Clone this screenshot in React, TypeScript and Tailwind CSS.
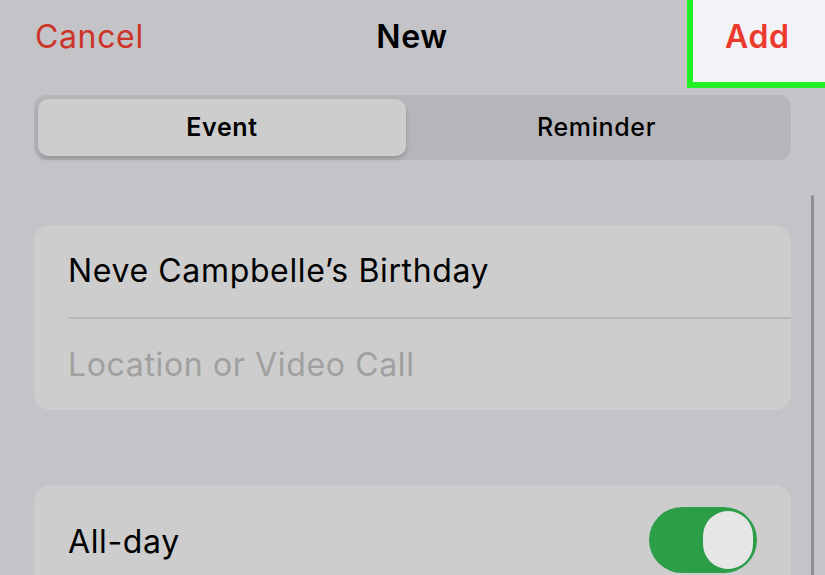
export default function App() {
  return (
    <div className="w-[825px] h-[575px] overflow-hidden bg-[#c4c3c8] relative tracking-[0.04em]" style={{ fontFamily: 'Inter, "Liberation Sans", sans-serif' }}>
      {/* nav bar */}
      <div className="h-[95px] flex items-start">
        <div className="w-[337px] pl-[35px] pt-[13px] text-[32px] text-[#cd3428]">Cancel</div>
        <div className="w-[150px] pt-[13px] text-center text-[32px] font-semibold text-black">New</div>
        <div className="flex-1" />
        <div className="w-[138px] h-[88px] border-[6px] border-r-0 border-t-0 border-[#22ef24] bg-[#f2f2f7] flex items-start pl-[32px] pt-[13px] text-[32px] font-semibold text-[#ec3a2f]">
          Add
        </div>
      </div>

      {/* segmented control */}
      <div className="mx-[34px] h-[65px] rounded-[12px] bg-[#b6b5ba] p-[4px] flex">
        <div className="w-[368px] rounded-[10px] bg-[#cdcdcd] shadow-[0_3px_4px_rgba(0,0,0,0.18)] flex items-center justify-center text-[25px] font-semibold text-black">Event</div>
        <div className="flex-1 flex items-center justify-center text-[25px] font-medium text-black">Reminder</div>
      </div>

      {/* scroll indicator */}
      <div className="absolute right-[11px] top-[195px] w-[3px] h-[400px] rounded-full bg-[#8e8d92]" />

      {/* title/location card */}
      <div className="mx-[34px] mt-[65px] h-[185px] rounded-[16px] bg-[#cdcdcd] pl-[34px] flex flex-col">
        <div className="h-[92px] flex items-center text-[32px] text-black">Neve Campbelle’s Birthday</div>
        <div className="h-[2px] bg-[#b8b8b8]" />
        <div className="flex-1 flex items-center text-[32px] text-[#a0a0a0]">Location or Video Call</div>
      </div>

      {/* all-day card */}
      <div className="mx-[34px] mt-[75px] h-[110px] rounded-[16px] bg-[#cdcdcd] pl-[34px] pr-[34px] flex items-start">
        <div className="flex-1 pt-[33px] text-[32px] text-black">All-day</div>
        <div className="mt-[22px] w-[108px] h-[66px] rounded-full bg-[#2b9e47] p-[4px] flex justify-end">
          <div className="w-[50px] h-[58px] rounded-full bg-[#e6e6e6]" />
        </div>
      </div>
    </div>
  )
}
